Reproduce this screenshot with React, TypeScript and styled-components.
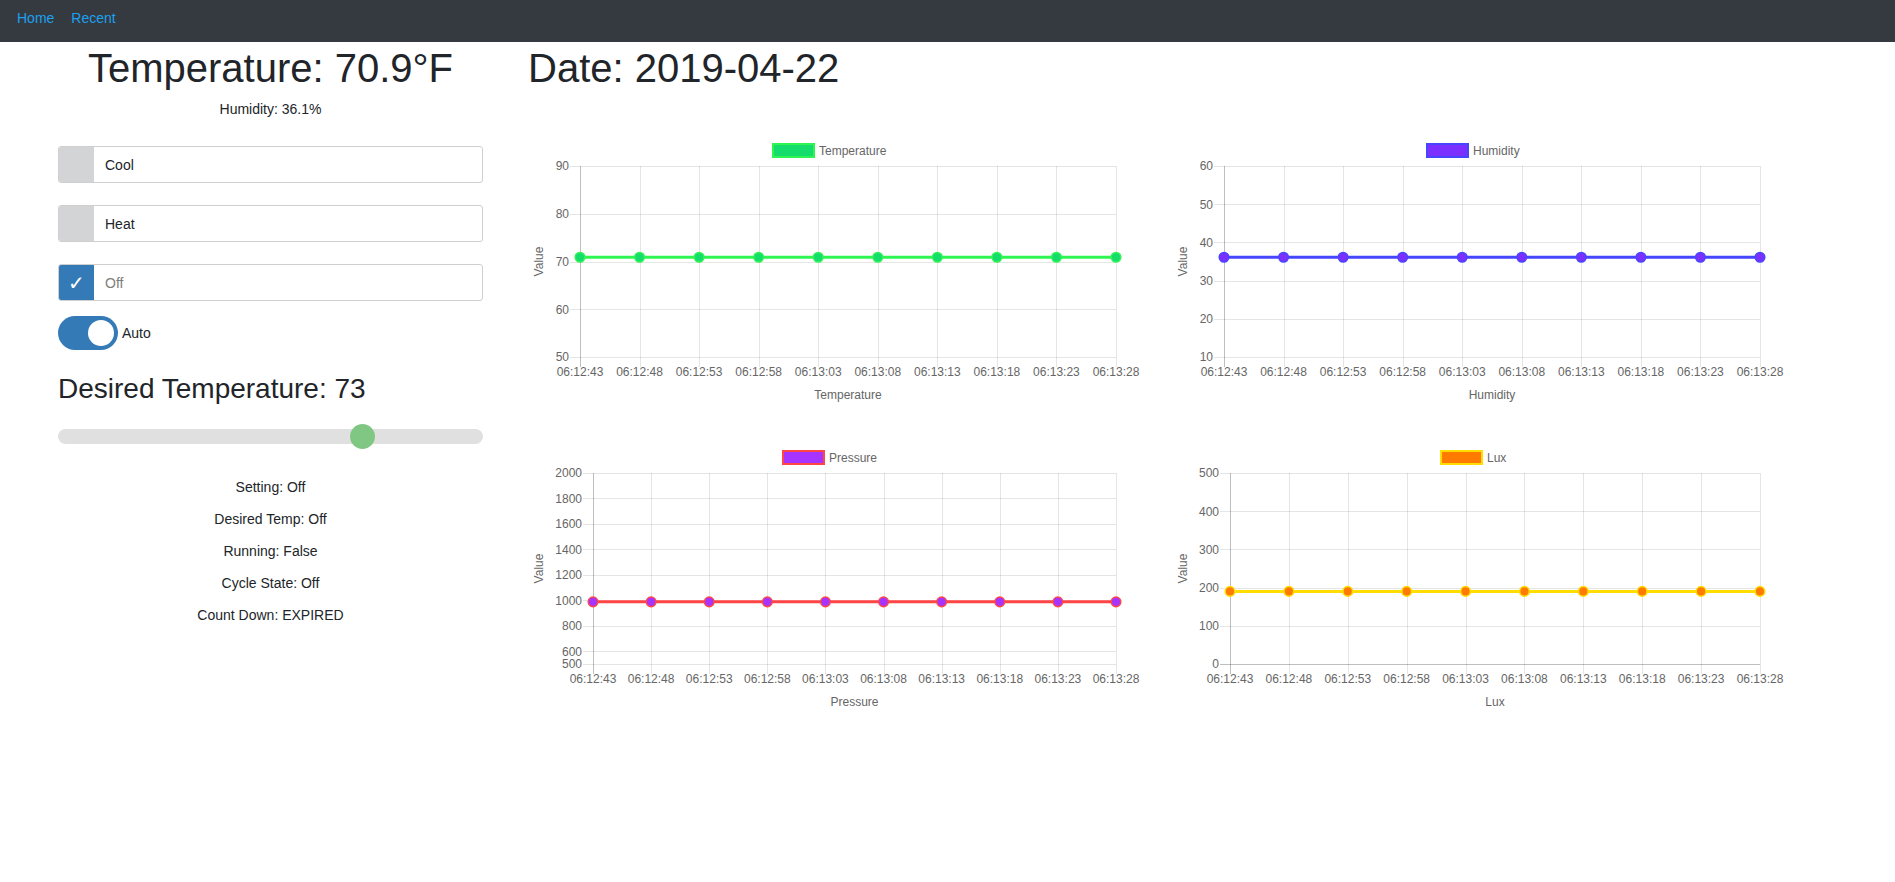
import React from "react";
import styled, { createGlobalStyle } from "styled-components";

const GlobalStyle = createGlobalStyle`
  body {
    margin: 0;
    font-family: "Liberation Sans", Arial, sans-serif;
    color: #212529;
    background: #fff;
  }
`;

const times = [
  "06:12:43",
  "06:12:48",
  "06:12:53",
  "06:12:58",
  "06:13:03",
  "06:13:08",
  "06:13:13",
  "06:13:18",
  "06:13:23",
  "06:13:28",
];

type ChartSpec = {
  label: string;
  min: number;
  max: number;
  ticks: number[];
  value: number;
  fill: string;
  stroke: string;
  axisX: number;
  legendLeft: number;
  zero?: boolean;
};

const charts: ChartSpec[] = [
  { label: "Temperature", min: 50, max: 90, ticks: [90, 80, 70, 60, 50], value: 70.9, fill: "#14dd6c", stroke: "#2ff552", axisX: 50, legendLeft: 242 },
  { label: "Humidity", min: 10, max: 60, ticks: [60, 50, 40, 30, 20, 10], value: 36.1, fill: "#7b30ff", stroke: "#4646ff", axisX: 50, legendLeft: 252 },
  { label: "Pressure", min: 500, max: 2000, ticks: [2000, 1800, 1600, 1400, 1200, 1000, 800, 600, 500], value: 988, fill: "#a633ff", stroke: "#ff4545", axisX: 63, legendLeft: 252 },
  { label: "Lux", min: 0, max: 500, ticks: [500, 400, 300, 200, 100, 0], value: 190, fill: "#ff7b00", stroke: "#ffdd00", axisX: 56, legendLeft: 266, zero: true },
];

const options = [
  { label: "Cool", checked: false },
  { label: "Heat", checked: false },
  { label: "Off", checked: true },
];

const status = [
  "Setting: Off",
  "Desired Temp: Off",
  "Running: False",
  "Cycle State: Off",
  "Count Down: EXPIRED",
];

// chart canvas
const W = 620;
const H = 280;
const TOP = 33;
const BOTTOM = 224;
const RIGHT = 586;
const GRID = "rgba(0,0,0,0.1)";
const ZERO = "rgba(0,0,0,0.25)";

const LineChart: React.FC<{ spec: ChartSpec }> = ({ spec }) => {
  const { label, min, max, ticks, value, fill, stroke, axisX, legendLeft, zero } = spec;
  const yOf = (v: number) => TOP + ((max - v) / (max - min)) * (BOTTOM - TOP);
  const step = (RIGHT - axisX) / (times.length - 1);
  const xs = times.map((_, i) => axisX + i * step);
  const cy = yOf(value);
  const px = (n: number) => Math.round(n) + 0.5;

  return (
    <ChartSvg width={W} height={H} viewBox={`0 0 ${W} ${H}`}>
      <rect x={legendLeft + 1} y={11} width={41} height={13} fill={fill} stroke={stroke} strokeWidth={2} />
      <Tick x={legendLeft + 47} y={22}>
        {label}
      </Tick>

      {ticks.map((t) => {
        const y = px(yOf(t));
        const isZero = zero && t === 0;
        return (
          <g key={t}>
            <line x1={axisX - 10} x2={RIGHT} y1={y} y2={y} stroke={isZero ? ZERO : GRID} strokeWidth={1} />
            <Tick x={axisX - 11} y={yOf(t) + 4.3} textAnchor="end">
              {t}
            </Tick>
          </g>
        );
      })}

      {xs.map((x, i) => (
        <g key={times[i]}>
          <line x1={px(x)} x2={px(x)} y1={TOP} y2={BOTTOM + 10} stroke={i === 0 ? ZERO : GRID} strokeWidth={1} />
          <Tick x={x} y={BOTTOM + 19} textAnchor="middle">
            {times[i]}
          </Tick>
        </g>
      ))}

      <Tick x={(axisX + RIGHT) / 2} y={BOTTOM + 42} textAnchor="middle">
        {label}
      </Tick>
      <Tick transform={`translate(13, ${(TOP + BOTTOM) / 2}) rotate(-90)`} textAnchor="middle">
        Value
      </Tick>

      <line x1={xs[0]} x2={xs[xs.length - 1]} y1={cy} y2={cy} stroke={stroke} strokeWidth={3} />
      {xs.map((x, i) => (
        <circle key={i} cx={x} cy={cy} r={4.8} fill={fill} stroke={stroke} strokeWidth={1.5} />
      ))}
    </ChartSvg>
  );
};

const App: React.FC = () => {
  const desired = 73;
  return (
    <>
      <GlobalStyle />
      <NavBar>
        <NavLink href="#">Home</NavLink>
        <NavLink href="#">Recent</NavLink>
      </NavBar>
      <Page>
        <LeftColumn>
          <Headline $align="center">Temperature: 70.9°F</Headline>
          <SubText>Humidity: 36.1%</SubText>

          <OptionList>
            {options.map((o) => (
              <OptionBox key={o.label}>
                <CheckSquare $checked={o.checked}>{o.checked ? "✓" : ""}</CheckSquare>
                <OptionLabel $muted={o.checked}>{o.label}</OptionLabel>
              </OptionBox>
            ))}
          </OptionList>

          <ToggleRow>
            <ToggleTrack>
              <ToggleKnob />
            </ToggleTrack>
            <ToggleLabel>Auto</ToggleLabel>
          </ToggleRow>

          <SubHeading>Desired Temperature: {desired}</SubHeading>
          <Slider>
            <SliderTrack />
            <SliderThumb style={{ left: `${(desired / 100) * (425 - 25)}px` }} />
          </Slider>

          <StatusList>
            {status.map((s) => (
              <StatusLine key={s}>{s}</StatusLine>
            ))}
          </StatusList>
        </LeftColumn>

        <RightColumn>
          <Headline $align="left">Date: 2019-04-22</Headline>
          <ChartGrid>
            {charts.map((c) => (
              <LineChart key={c.label} spec={c} />
            ))}
          </ChartGrid>
        </RightColumn>
      </Page>
    </>
  );
};

const NavBar = styled.nav`
  height: 42px;
  box-sizing: border-box;
  background: #343a40;
  display: flex;
  align-items: flex-start;
  gap: 17px;
  padding: 9px 17px 0;
`;

const NavLink = styled.a`
  font-size: 14px;
  line-height: 18px;
  color: #1da1ee;
  text-decoration: none;
`;

const Page = styled.main`
  display: grid;
  grid-template-columns: 425px 1fr;
  column-gap: 45px;
  padding-left: 58px;
`;

const LeftColumn = styled.section`
  display: flex;
  flex-direction: column;
`;

const RightColumn = styled.section`
  display: flex;
  flex-direction: column;
`;

const Headline = styled.h1<{ $align: string }>`
  margin: 2px 0 0;
  font-size: 40px;
  line-height: 48px;
  font-weight: 400;
  text-align: ${(p) => p.$align};
  white-space: nowrap;
`;

const SubText = styled.div`
  margin-top: 7px;
  font-size: 14px;
  line-height: 21px;
  text-align: center;
`;

const OptionList = styled.div`
  margin-top: 26px;
  display: flex;
  flex-direction: column;
  gap: 22px;
`;

const OptionBox = styled.div`
  height: 37px;
  box-sizing: border-box;
  border: 1px solid #cfcfcf;
  border-radius: 3px;
  display: flex;
  align-items: stretch;
  overflow: hidden;
`;

const CheckSquare = styled.div<{ $checked: boolean }>`
  width: 35px;
  background: ${(p) => (p.$checked ? "#337ab7" : "#d3d4d6")};
  color: #fff;
  display: flex;
  align-items: center;
  justify-content: center;
  font-family: "DejaVu Sans", sans-serif;
  font-size: 20px;
  font-weight: 700;
`;

const OptionLabel = styled.span<{ $muted: boolean }>`
  display: flex;
  align-items: center;
  padding-left: 11px;
  font-size: 14px;
  color: ${(p) => (p.$muted ? "#7d7d7d" : "#212529")};
`;

const ToggleRow = styled.div`
  margin-top: 15px;
  display: flex;
  align-items: center;
  gap: 4px;
`;

const ToggleTrack = styled.div`
  position: relative;
  width: 60px;
  height: 34px;
  border-radius: 17px;
  background: #337ab7;
`;

const ToggleKnob = styled.div`
  position: absolute;
  top: 4px;
  left: 30px;
  width: 26px;
  height: 26px;
  border-radius: 50%;
  background: #fff;
`;

const ToggleLabel = styled.span`
  font-size: 14px;
`;

const SubHeading = styled.h3`
  margin: 22px 0 0;
  font-size: 28px;
  line-height: 34px;
  font-weight: 400;
`;

const Slider = styled.div`
  position: relative;
  margin-top: 18px;
  height: 25px;
  display: flex;
  align-items: center;
`;

const SliderTrack = styled.div`
  width: 100%;
  height: 15px;
  border-radius: 8px;
  background: #e0e0e0;
`;

const SliderThumb = styled.div`
  position: absolute;
  top: 0;
  width: 25px;
  height: 25px;
  border-radius: 50%;
  background: #81c784;
`;

const StatusList = styled.div`
  margin-top: 22px;
  display: flex;
  flex-direction: column;
`;

const StatusLine = styled.div`
  font-size: 14px;
  line-height: 32px;
  text-align: center;
`;

const ChartGrid = styled.div`
  margin-top: 41px;
  margin-left: 2px;
  display: grid;
  grid-template-columns: ${W}px ${W}px;
  column-gap: 24px;
  row-gap: 27px;
`;

const ChartSvg = styled.svg`
  display: block;
  font-family: "Liberation Sans", Arial, sans-serif;
`;

const Tick = styled.text`
  fill: #666;
  font-size: 12px;
`;

export default App;
